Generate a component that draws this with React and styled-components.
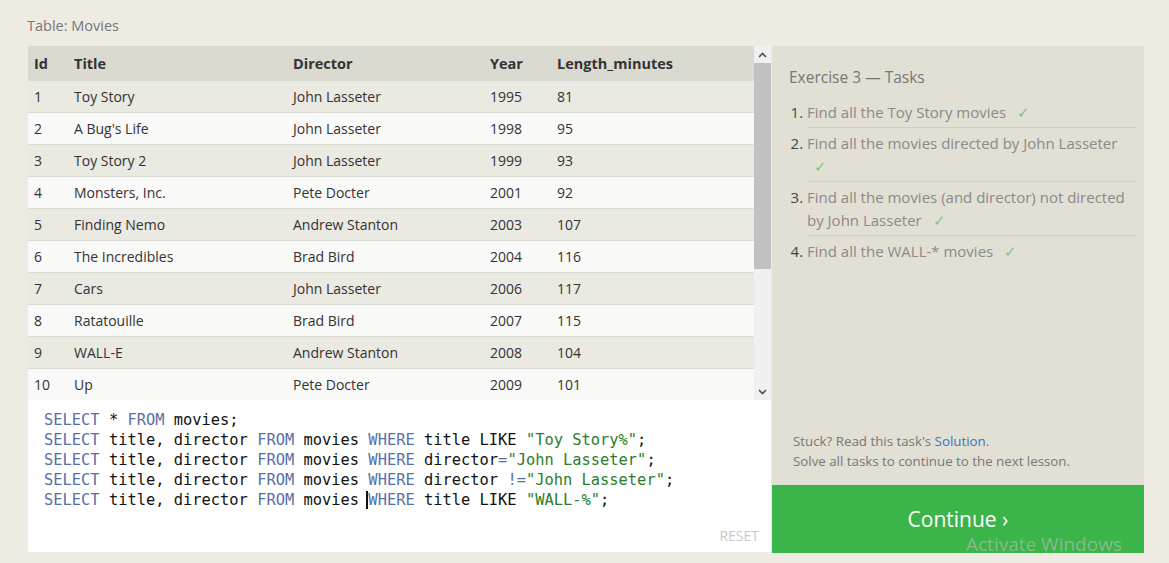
import styled, { createGlobalStyle } from "styled-components";

const GlobalStyle = createGlobalStyle`
  html, body {
    margin: 0;
    padding: 0;
    background: #eeebe3;
    font-family: "Open Sans", "Liberation Sans", sans-serif;
    overflow: hidden;
  }
`;

const Page = styled.div`
  position: relative;
  width: 1169px;
  height: 563px;
  padding: 17px 25px 0 28px;
  box-sizing: border-box;
  overflow: hidden;
`;

const Caption = styled.div`
  font-size: 14.5px;
  line-height: 18px;
  color: #777;
  margin-left: -1px;
  margin-bottom: 11px;
`;

const Main = styled.div`
  display: flex;
  gap: 1px;
`;

const LeftCol = styled.div`
  width: 743px;
  display: flex;
  flex-direction: column;
`;

const TableArea = styled.div`
  display: flex;
  height: 354px;
`;

const Table = styled.table`
  flex: 1;
  border-collapse: collapse;
  table-layout: fixed;
  font-size: 14px;
  color: #333;
`;

const Th = styled.th`
  width: ${(p) => p.w || "auto"};
  height: 34px;
  padding: 0 0 0 6px;
  text-align: left;
  font-weight: 700;
  font-size: 14.5px;
  color: #333;
  background: #dbdad0;
`;

const Row = styled.tr`
  background: ${(p) => (p.odd ? "#eae9e2" : "#f9f9f8")};
  border-top: 1px solid #dcdcd6;
`;

const Td = styled.td`
  height: 31px;
  padding: 0 0 0 6px;
  white-space: nowrap;
`;

const Scrollbar = styled.div`
  width: 17px;
  background: #f0f0f0;
  display: flex;
  flex-direction: column;
`;

const ScrollBtn = styled.div`
  height: 17px;
  display: flex;
  align-items: center;
  justify-content: center;
`;

const Thumb = styled.div`
  height: 206px;
  background: #c1c1c1;
`;

const Track = styled.div`
  flex: 1;
`;

const Editor = styled.div`
  height: 152px;
  box-sizing: border-box;
  background: #fff;
  padding: 10px 12px 7px 16px;
  display: flex;
  flex-direction: column;
`;

const Code = styled.pre`
  margin: 0;
  font-family: "DejaVu Sans Mono", "Liberation Mono", monospace;
  font-size: 15.4px;
  line-height: 20px;
  color: #111;
`;

const Kw = styled.span`
  color: #5670a8;
`;

const Str = styled.span`
  color: #2b7d2b;
`;

const Caret = styled.span`
  border-left: 2px solid #111;
  margin-left: -2px;
`;

const Reset = styled.div`
  margin-top: auto;
  align-self: flex-end;
  font-size: 14px;
  color: #c8c8c8;
`;

const RightCol = styled.div`
  width: 372px;
  display: flex;
  flex-direction: column;
  background: #e2dfd4;
  height: 507px;
`;

const Tasks = styled.div`
  flex: 1;
  padding: 20px 8px 0 17px;
  display: flex;
  flex-direction: column;
`;

const TaskTitle = styled.div`
  font-size: 15.5px;
  line-height: 22px;
  color: #777;
  margin-bottom: 9px;
`;

const TaskList = styled.ol`
  margin: 0;
  padding: 0 0 0 18px;
  font-size: 15px;
  line-height: 23px;
  color: #444;
`;

const TaskItem = styled.li`
  padding: 4px 0 3px 0;
  border-bottom: ${(p) => (p.last ? "none" : "1px solid #d2cfc4")};
  &::marker {
    color: #444;
  }
`;

const TaskText = styled.span`
  color: #8a8a8a;
`;

const Check = styled.span`
  color: #7cc78a;
  margin-left: 7px;
`;

const Hint = styled.div`
  margin-top: auto;
  margin-bottom: 14px;
  padding-left: 4px;
  font-size: 13.3px;
  line-height: 20px;
  color: #777;
`;

const Link = styled.a`
  color: #3a73c3;
  text-decoration: none;
`;

const ContinueButton = styled.div`
  height: 68px;
  background: #3bb44a;
  color: #fff;
  font-size: 21px;
  display: flex;
  align-items: center;
  justify-content: center;
`;

const Watermark = styled.div`
  position: absolute;
  left: 966px;
  top: 531px;
  font-family: "Open Sans", "Liberation Sans", sans-serif;
  font-size: 19px;
  line-height: 27px;
  color: rgba(190, 190, 190, 0.6);
  pointer-events: none;
`;

const movies = [
  [1, "Toy Story", "John Lasseter", 1995, 81],
  [2, "A Bug's Life", "John Lasseter", 1998, 95],
  [3, "Toy Story 2", "John Lasseter", 1999, 93],
  [4, "Monsters, Inc.", "Pete Docter", 2001, 92],
  [5, "Finding Nemo", "Andrew Stanton", 2003, 107],
  [6, "The Incredibles", "Brad Bird", 2004, 116],
  [7, "Cars", "John Lasseter", 2006, 117],
  [8, "Ratatouille", "Brad Bird", 2007, 115],
  [9, "WALL-E", "Andrew Stanton", 2008, 104],
  [10, "Up", "Pete Docter", 2009, 101],
];

const tasks = [
  "Find all the Toy Story movies",
  "Find all the movies directed by John Lasseter",
  "Find all the movies (and director) not directed by John Lasseter",
  "Find all the WALL-* movies",
];

const Chevron = ({ down }) => (
  <svg width="9" height="6" viewBox="0 0 9 6">
    <path
      d={down ? "M1 1 L4.5 4.5 L8 1" : "M1 5 L4.5 1.5 L8 5"}
      fill="none"
      stroke="#505050"
      strokeWidth="1.6"
    />
  </svg>
);

const App = () => {
  return (
    <>
      <GlobalStyle />
      <Page>
        <Caption>Table: Movies</Caption>
        <Main>
          <LeftCol>
            <TableArea>
              <Table>
                <thead>
                  <tr>
                    <Th w="34px">Id</Th>
                    <Th w="213px">Title</Th>
                    <Th w="191px">Director</Th>
                    <Th w="61px">Year</Th>
                    <Th>Length_minutes</Th>
                  </tr>
                </thead>
                <tbody>
                  {movies.map((m, i) => (
                    <Row key={m[0]} odd={i % 2 === 0}>
                      {m.map((v, j) => (
                        <Td key={j}>{v}</Td>
                      ))}
                    </Row>
                  ))}
                </tbody>
              </Table>
              <Scrollbar>
                <ScrollBtn>
                  <Chevron />
                </ScrollBtn>
                <Thumb />
                <Track />
                <ScrollBtn>
                  <Chevron down />
                </ScrollBtn>
              </Scrollbar>
            </TableArea>
            <Editor>
              <Code>
                <Kw>SELECT</Kw> * <Kw>FROM</Kw> movies;{"\n"}
                <Kw>SELECT</Kw> title, director <Kw>FROM</Kw> movies <Kw>WHERE</Kw> title LIKE <Str>"Toy Story%"</Str>;{"\n"}
                <Kw>SELECT</Kw> title, director <Kw>FROM</Kw> movies <Kw>WHERE</Kw> director<Kw>=</Kw><Str>"John Lasseter"</Str>;{"\n"}
                <Kw>SELECT</Kw> title, director <Kw>FROM</Kw> movies <Kw>WHERE</Kw> director <Kw>!=</Kw><Str>"John Lasseter"</Str>;{"\n"}
                <Kw>SELECT</Kw> title, director <Kw>FROM</Kw> movies <Caret /><Kw>WHERE</Kw> title LIKE <Str>"WALL-%"</Str>;
              </Code>
              <Reset>RESET</Reset>
            </Editor>
          </LeftCol>
          <RightCol>
            <Tasks>
              <TaskTitle>Exercise 3 — Tasks</TaskTitle>
              <TaskList>
                {tasks.map((t, i) => (
                  <TaskItem key={t} last={i === tasks.length - 1}>
                    <TaskText>{t}</TaskText> <Check>✓</Check>
                  </TaskItem>
                ))}
              </TaskList>
              <Hint>
                Stuck? Read this task's <Link>Solution</Link>.
                <br />
                Solve all tasks to continue to the next lesson.
              </Hint>
            </Tasks>
            <ContinueButton>Continue ›</ContinueButton>
          </RightCol>
        </Main>
        <Watermark>
          Activate Windows
          <br />
          Go to Settings to activate Windows.
        </Watermark>
      </Page>
    </>
  );
};

export default App;
